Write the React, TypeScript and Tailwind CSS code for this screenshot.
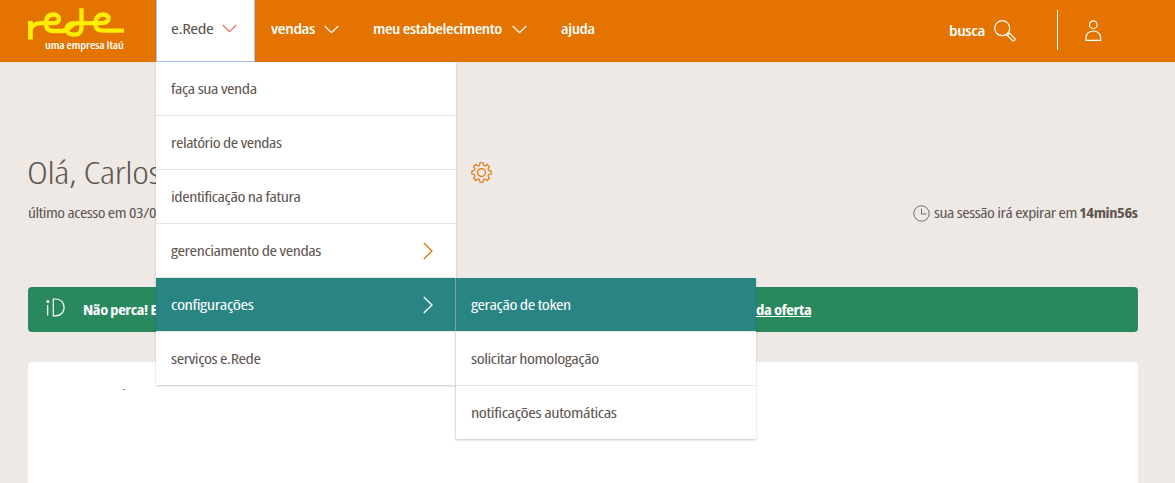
import { useLayoutEffect, useRef, useState } from 'react';

type FitProps = { text: string; width: number; className?: string };

/* Condenses a line of text horizontally so that it spans the given width. */
function Fit({ text, width, className = '' }: FitProps) {
  const ref = useRef<HTMLSpanElement>(null);
  const [scale, setScale] = useState(1);
  useLayoutEffect(() => {
    if (ref.current) setScale(width / ref.current.offsetWidth);
  }, [text, width]);
  return (
    <span className="flex shrink-0" style={{ width }}>
      <span
        ref={ref}
        className={`block shrink-0 origin-left whitespace-nowrap ${className}`}
        style={{ transform: `scaleX(${scale})` }}
      >
        {text}
      </span>
    </span>
  );
}

function ChevronDown({ className }: { className: string }) {
  return (
    <svg className={`h-[9px] w-[15px] shrink-0 ${className}`} viewBox="0 0 15 9" fill="none" stroke="currentColor" strokeWidth="1.2">
      <path d="M.7 1 7.5 7.7 14.3 1" />
    </svg>
  );
}

function ChevronRight({ className }: { className: string }) {
  return (
    <svg className={`h-[18px] w-[10px] shrink-0 ${className}`} viewBox="0 0 10 18" fill="none" stroke="currentColor" strokeWidth="1.3">
      <path d="M.8 1 9 9 .8 17" />
    </svg>
  );
}

function Logo() {
  return (
    <div className="flex w-[97px] flex-col items-start pt-[7px]">
      <svg className="h-[33px] w-[97px]" viewBox="0 0 97 33" fill="none" stroke="#ffee00" strokeWidth="4.3">
        <path d="M2.4 32.500V14" strokeWidth="4.900" />
        <path d="M2.4 22.500C4.500 17.500 8 16.200 13 16.200H26C33 16.200 32.500 7.500 25.500 7.500C19 7.500 18 12 18 16.500C18 21.500 20 24 25 24H34C42 24 42 16.200 50 16.200H72C83 16.200 82.500 7.500 75.500 7.500C69 7.500 67.500 12 67.500 17C67.500 22 70 23.700 75 23.700H96" />
        <path d="M53.500 1.200V20C53.500 25.500 50.500 27.700 46.500 27.700C41.500 27.700 38.700 25.500 38.700 22C38.700 18.500 41.500 16.200 46 16.200" />
      </svg>
      <Fit text="uma empresa Itaú" width={79} className="ml-[17px] text-[10.5px] leading-[10px] font-semibold tracking-[-0.1px] text-white" />
    </div>
  );
}

const gearPath = (() => {
  const pts: string[] = [];
  for (let i = 0; i < 8; i++) {
    const at = (r: number, deg: number) => {
      const a = ((i * 45 + deg - 90) * Math.PI) / 180;
      return `${(10.5 + r * Math.cos(a)).toFixed(2)} ${(10.5 + r * Math.sin(a)).toFixed(2)}`;
    };
    pts.push(`${i ? 'L' : 'M'}${at(7.8, -14)}L${at(9.8, -9)}L${at(9.8, 9)}L${at(7.8, 14)}Q${at(6.9, 22.5)} ${at(7.8, 31)}`);
  }
  return pts.join('') + 'Z';
})();

type Item = { text: string; width: number; more?: boolean; active?: boolean };

const mainMenu: Item[] = [
  { text: 'faça sua venda', width: 86 },
  { text: 'relatório de vendas', width: 111 },
  { text: 'identificação na fatura', width: 130 },
  { text: 'gerenciamento de vendas', width: 150, more: true },
  { text: 'configurações', width: 83, more: true, active: true },
  { text: 'serviços e.Rede', width: 90 },
];

const subMenu: Item[] = [
  { text: 'geração de token', width: 100, active: true },
  { text: 'solicitar homologação', width: 128 },
  { text: 'notificações automáticas', width: 145 },
];

function Menu({ items }: { items: Item[] }) {
  return (
    <ul className="w-[300px] bg-white shadow-[0_1px_2px_rgba(80,70,50,0.3)]">
      {items.map((item) => (
        <li
          key={item.text}
          className={`flex h-[54px] items-center justify-between border-b border-[#e6e4e1] pr-[23px] pl-[15px] last:h-[53px] last:border-b-0 ${
            item.active ? 'bg-[#298484] font-medium text-white' : 'text-[#5f5650]'
          }`}
        >
          <Fit text={item.text} width={item.width} />
          {item.more && <ChevronRight className={item.active ? 'text-white' : 'text-[#e57300]'} />}
        </li>
      ))}
    </ul>
  );
}

export default function App() {
  return (
    <div className="relative flex h-[483px] w-[1175px] flex-col overflow-hidden bg-[#eee9e5] font-['Open_Sans',sans-serif] text-[14.5px] leading-5 tracking-[-0.35px] text-[#5f5650] [font-stretch:87%]">
      <header className="flex h-[62px] shrink-0 bg-[#e57300] pl-7 font-semibold text-white">
        <Logo />
        <nav className="ml-[31px] flex pb-1">
          <div className="-mb-1 flex h-[62px] w-[99px] items-center border border-t-0 border-[#a9bff5] bg-white pb-1 pl-[14px] font-medium text-[#5c524d]">
            <Fit text="e.Rede" width={42} />
            <ChevronDown className="ml-[9px] text-[#e0705c]" />
          </div>
          <div className="ml-4 flex items-center">
            <Fit text="vendas" width={43.5} />
            <ChevronDown className="ml-[9px]" />
          </div>
          <div className="ml-[34.500px] flex items-center">
            <Fit text="meu estabelecimento" width={128.5} />
            <ChevronDown className="ml-[10px]" />
          </div>
          <div className="ml-[34px] flex items-center">
            <Fit text="ajuda" width={33.5} />
          </div>
        </nav>
        <div className="mr-[73px] ml-auto flex items-center">
          <Fit text="busca" width={36} />
          <svg className="ml-[9px] h-[22px] w-[22px]" viewBox="0 0 22 22" fill="none" stroke="currentColor" strokeWidth="1.2">
            <circle cx="8.200" cy="8.200" r="7.500" />
            <path d="M13.300 15.500 15.600 13.200 20.700 18.300Q21.600 19.300 20.500 20.300Q19.500 21.300 18.500 20.500ZM13.200 13.200 14.500 14.500" />
          </svg>
          <div className="mb-[2px] ml-[41px] h-10 w-px bg-white" />
          <svg className="ml-[27px] h-[22px] w-[17px]" viewBox="0 0 17 22" fill="none" stroke="currentColor" strokeWidth="1.200">
            <circle cx="8.300" cy="4.700" r="3.800" />
            <path d="M1 20.400V17.500C1 8.800 15.600 8.800 15.600 17.500V20.400Z" />
          </svg>
        </div>
      </header>

      <main className="flex flex-col pr-[37px] pl-7">
        <div className="mt-[90px] flex h-10 items-center">
          <div className="-ml-px w-[133px]">
            <Fit text="Olá, Carlos" width={134} className="text-[32px] leading-10 font-light" />
          </div>
          <svg className="ml-[311px] h-[21px] w-[21px] text-[#e57300]" viewBox="0 0 21 21" fill="none" stroke="currentColor" strokeWidth="1.1">
            <path d={gearPath} />
            <circle cx="10.500" cy="10.500" r="3.900" />
          </svg>
        </div>
        <div className="mt-[11px] flex h-5 items-center justify-between">
          <Fit text="último acesso em 03/0" width={128.5} />
          <div className="flex items-center">
            <svg className="mr-[4px] h-[17px] w-[17px]" viewBox="0 0 17 17" fill="none" stroke="#756c67" strokeWidth="1">
              <circle cx="8.500" cy="8.500" r="7.700" />
              <path d="M8.500 3.500V9H13.500" />
            </svg>
            <Fit text="sua sessão irá expirar em" width={143} />
            <div className="pr-[1px] pl-[2px]">
              <Fit text="14min56s" width={58} className="font-bold" />
            </div>
          </div>
        </div>
        <div className="mt-[64px] flex h-[45px] items-center justify-between rounded-[4px] bg-[#2a885f] pr-[327px] pl-[18px] font-bold text-white">
          <div className="flex items-center">
            <svg className="mr-[18px] mb-1 h-[19px] w-[19px]" viewBox="0 0 19 19" fill="none" stroke="currentColor" strokeWidth="1.2">
              <path d="M1.700 7V17.500M7.300 1H9.500C21 1 21 17.900 9.500 17.900H7.300Z" />
              <circle cx="1.900" cy="3.500" r="1.500" fill="currentColor" stroke="none" />
            </svg>
            <Fit text="Não perca! E" width={74} />
          </div>
          <Fit text="da oferta" width={55.5} className="underline" />
        </div>
        <section className="mt-[30px] flex h-[130px] rounded-t-[4px] bg-white pt-[27px] pl-[95px]">
          <div className="h-px w-[2px] bg-[#777]" />
        </section>
      </main>

      <div className="absolute top-[62px] left-[156px] flex items-start">
        <Menu items={mainMenu} />
        <div className="mt-[216px] -ml-px border-l border-[#dedbd7]/50">
          <Menu items={subMenu} />
        </div>
      </div>
    </div>
  );
}
